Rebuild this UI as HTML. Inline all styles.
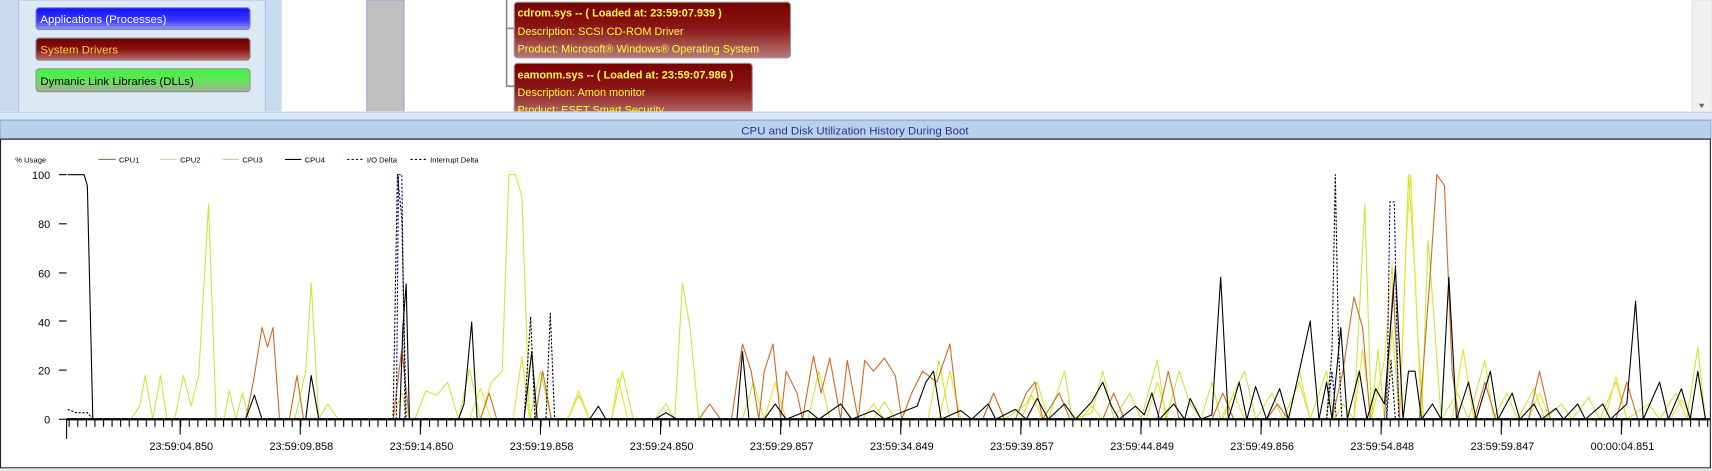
<!DOCTYPE html>
<html><head><meta charset="utf-8"><style>
html,body{margin:0;padding:0;background:#fff;overflow:hidden}
svg{display:block}
text{font-family:"Liberation Sans",sans-serif}
</style></head><body>
<svg width="1712" height="471" viewBox="0 0 1568 431.4" preserveAspectRatio="none" xmlns="http://www.w3.org/2000/svg">
<defs>
<linearGradient id="gb" x1="0" y1="0" x2="0" y2="1"><stop offset="0" stop-color="#1010ff"/><stop offset="0.6" stop-color="#3a3aff"/><stop offset="1" stop-color="#9a9af0"/></linearGradient>
<linearGradient id="gr" x1="0" y1="0" x2="0" y2="1"><stop offset="0" stop-color="#6e0000"/><stop offset="0.5" stop-color="#8a1010"/><stop offset="1" stop-color="#b87070"/></linearGradient>
<linearGradient id="gg" x1="0" y1="0" x2="0" y2="1"><stop offset="0" stop-color="#40f040"/><stop offset="0.5" stop-color="#60e858"/><stop offset="1" stop-color="#a8a898"/></linearGradient>
<linearGradient id="gbox" x1="0" y1="0" x2="0" y2="1"><stop offset="0" stop-color="#780000"/><stop offset="0.45" stop-color="#8a1515"/><stop offset="1" stop-color="#b87878"/></linearGradient>
<pattern id="mt" x="165" y="0" width="7.857" height="431" patternUnits="userSpaceOnUse"><rect x="0" y="384" width="1" height="7" fill="#000"/></pattern>
</defs>
<!-- top area -->
<rect x="0" y="0" width="1568" height="103" fill="#fff"/>
<rect x="0" y="0" width="258" height="103" fill="#c9daef"/>
<rect x="17" y="0" width="226" height="103" fill="#dde8f5" stroke="#a9c3e6" stroke-width="1"/>
<rect x="33" y="7" width="196" height="20" rx="3" fill="url(#gb)" stroke="#7a8ab0"/>
<text x="37" y="21" font-size="10.5" fill="#fff">Applications (Processes)</text>
<rect x="33" y="35" width="196" height="20" rx="3" fill="url(#gr)" stroke="#8a7a80"/>
<text x="37" y="49" font-size="10.5" fill="#ffd040">System Drivers</text>
<rect x="33" y="63" width="196" height="21" rx="3" fill="url(#gg)" stroke="#8a9a88"/>
<text x="37" y="78" font-size="10.5" fill="#000">Dymanic Link Libraries (DLLs)</text>
<rect x="336" y="0" width="34" height="103" fill="#c0c0c0" stroke="#8fa8cc"/>
<polyline points="464,0 464,79 471,79" fill="none" stroke="#888" stroke-width="1.5"/>
<line x1="464" y1="26" x2="471" y2="26" stroke="#888" stroke-width="1.5"/>
<rect x="471" y="2" width="253" height="51" rx="3" fill="url(#gbox)" stroke="#999"/>
<text x="474" y="15" font-size="10" font-weight="bold" fill="#ffff30">cdrom.sys -- ( Loaded at: 23:59:07.939 )</text>
<text x="474" y="32" font-size="10" fill="#ffff30">Description: SCSI CD-ROM Driver</text>
<text x="474" y="48" font-size="10" fill="#ffff30">Product: Microsoft® Windows® Operating System</text>
<rect x="471" y="58" width="218" height="50" rx="3" fill="url(#gbox)" stroke="#999"/>
<text x="474" y="72" font-size="10" font-weight="bold" fill="#ffff30">eamonm.sys -- ( Loaded at: 23:59:07.986 )</text>
<text x="474" y="88" font-size="10" fill="#ffff30">Description: Amon monitor</text>
<text x="474" y="104" font-size="10" fill="#ffff30">Product: ESET Smart Security</text>
<rect x="1550" y="0" width="18" height="103" fill="#f0f0f0" stroke="#e0e0e0"/>
<polygon points="1556,95 1561,95 1558.5,99" fill="#666"/>
<rect x="0" y="102" width="1568" height="8" fill="#dce8f5"/>
<line x1="0" y1="103" x2="1568" y2="103" stroke="#c0d2ea"/>
<!-- title -->
<rect x="0" y="110" width="1567" height="17" fill="#b9d1ea" stroke="#8aa2d8"/>
<text x="783" y="123" font-size="10.5" fill="#303090" text-anchor="middle">CPU and Disk Utilization History During Boot</text>
<!-- chart -->
<rect x="0.5" y="127.5" width="1566" height="301" fill="#fff" stroke="#222"/>
<rect x="0" y="429" width="1568" height="3" fill="#e8e8e8"/>
<text x="14" y="149" font-size="7" fill="#000">% Usage</text>
<g font-size="7" fill="#000">
<line x1="90" y1="146" x2="106" y2="146" stroke="#d06a20"/><text x="109" y="149">CPU1</text>
<line x1="147" y1="146" x2="162" y2="146" stroke="#f0e030"/><text x="165" y="149">CPU2</text>
<line x1="204" y1="146" x2="219" y2="146" stroke="#c8e838"/><text x="222" y="149">CPU3</text>
<line x1="261" y1="146" x2="276" y2="146" stroke="#000"/><text x="279" y="149">CPU4</text>
<line x1="318" y1="146" x2="333" y2="146" stroke="#000080" stroke-dasharray="2,2"/><text x="336" y="149">I/O Delta</text>
<line x1="376" y1="146" x2="391" y2="146" stroke="#000" stroke-dasharray="2,2"/><text x="394" y="149">Interrupt Delta</text>
</g>
<g font-size="10" fill="#000" text-anchor="end">
<text x="46" y="164">100</text><text x="46" y="209">80</text><text x="46" y="254">60</text><text x="46" y="299">40</text><text x="46" y="343">20</text><text x="46" y="388">0</text>
</g>
<g stroke="#000">
<line x1="54" y1="160" x2="61" y2="160"/><line x1="54" y1="205" x2="61" y2="205"/><line x1="54" y1="250" x2="61" y2="250"/><line x1="54" y1="294" x2="61" y2="294"/><line x1="54" y1="339" x2="61" y2="339"/><line x1="54" y1="384" x2="61" y2="384"/>
<line x1="61" y1="384" x2="61" y2="402"/>
</g>
<g fill="none" stroke-width="1" stroke-linejoin="round">
<polyline stroke="#c8e838" points="62,384 120,384 128,372 133,344 140,384 147,344 153,384 160,384 168,344 175,372 182,344 191,187 198,384 205,384 210,358 216,384 222,360 228,384 270,384 280,340 285,259 292,384 300,370 310,384 380,384 390,358 400,362 410,350 420,384 430,338 440,384 450,350 460,340 466,160 472,160 478,180 485,384 495,340 505,384 520,384 530,362 540,384 560,384 570,340 580,384 600,384 610,370 618,384 625,259 632,300 640,384 680,384 690,350 700,384 740,384 750,340 760,384 800,384 810,368 820,384 850,384 860,330 870,384 900,384 910,360 920,384 940,370 950,350 960,384 975,340 982,384 1000,378 1010,340 1020,384 1035,360 1045,384 1060,330 1068,384 1080,340 1090,370 1100,384 1110,350 1118,384 1130,360 1140,340 1150,384 1165,360 1175,384 1190,350 1200,384 1215,340 1222,384 1230,370 1240,384 1250,187 1256,384 1262,320 1268,384 1275,300 1282,384 1290,160 1296,250 1302,384 1308,220 1314,300 1320,384 1335,360 1345,384 1360,330 1368,384 1380,360 1390,384 1405,356 1415,384 1430,370 1440,384 1455,364 1465,384 1480,350 1490,384 1510,370 1520,384 1535,360 1545,384 1555,318 1562,384"/>
<polyline stroke="#f0e030" points="62,384 360,384 368,360 375,384 430,384 440,356 450,384 470,384 478,327 485,384 520,384 530,358 540,384 560,384 566,346 575,384 700,384 710,350 720,384 790,384 800,370 810,384 860,384 870,340 880,384 935,384 945,362 955,384 990,384 1000,372 1010,384 1050,384 1060,350 1070,384 1120,384 1130,360 1140,384 1180,384 1190,340 1200,384 1240,384 1248,320 1256,384 1268,330 1275,242 1282,384 1288,220 1292,160 1298,300 1304,384 1330,384 1340,320 1350,384 1400,384 1410,360 1420,384 1470,384 1480,345 1490,384 1530,384 1540,366 1550,384 1565,384"/>
<polyline stroke="#d06a20" points="62,384 225,384 232,350 240,300 245,318 250,300 256,384 265,384 272,344 278,384 360,384 368,320 375,384 440,384 448,360 455,384 490,384 497,340 505,384 640,384 650,370 660,384 670,384 680,315 688,340 695,384 700,340 708,315 715,384 720,340 730,360 735,384 745,326 752,360 760,328 770,384 776,330 786,384 792,330 800,340 810,328 820,344 826,384 835,360 845,340 858,350 870,315 878,384 900,384 910,360 920,384 930,384 940,360 948,350 955,384 970,360 980,384 1010,384 1020,360 1030,384 1060,384 1070,340 1080,384 1110,384 1120,360 1130,384 1160,384 1170,370 1180,384 1220,384 1230,340 1240,272 1248,300 1255,384 1268,384 1276,260 1282,384 1300,384 1310,250 1316,160 1323,170 1330,340 1336,384 1350,384 1360,350 1370,384 1400,384 1410,340 1420,384 1480,384 1490,350 1500,384 1555,384"/>
<polyline stroke="#000" points="62,160 77,160 80,170 85,384 225,384 233,362 240,384 280,384 285,344 292,384 366,384 369,300 372,260 375,384 420,384 425,370 432,295 437,384 480,384 487,322 492,384 540,384 548,372 555,384 600,384 610,378 620,384 675,384 680,322 686,384 700,384 710,370 720,384 740,376 750,384 770,370 780,384 800,376 810,384 840,372 848,350 855,340 862,384 880,376 890,384 905,370 912,384 930,375 940,384 950,365 960,384 975,370 985,384 1000,368 1010,350 1018,372 1025,384 1040,372 1048,380 1055,360 1062,384 1075,370 1085,384 1090,365 1100,384 1110,380 1118,254 1125,384 1135,350 1142,384 1150,354 1160,384 1172,356 1180,384 1190,340 1200,294 1208,384 1215,350 1220,384 1228,300 1234,384 1245,340 1252,384 1260,356 1268,370 1278,245 1285,384 1290,340 1296,340 1302,384 1312,370 1320,384 1327,254 1334,384 1345,350 1352,384 1365,340 1372,384 1385,360 1392,384 1405,370 1412,384 1425,374 1432,384 1445,370 1452,384 1468,370 1475,384 1490,370 1498,276 1505,384 1520,350 1528,384 1540,356 1548,384 1555,340 1562,384"/>
<polyline stroke="#000080" stroke-dasharray="2,1.5" points="62,384 363,384 365,160 368,160 371,384 1215,384 1220,340 1224,384 1270,384 1273,185 1277,185 1281,384 1565,384"/>
<polyline stroke="#000" stroke-dasharray="2,1.5" points="62,375 70,378 80,378 85,384 360,384 364,160 368,200 372,384 480,384 486,290 490,384 500,384 504,287 508,384 1215,384 1220,320 1223,160 1226,320 1229,384 1270,384 1274,330 1278,384 1565,384"/>
</g>
<rect x="61" y="384" width="1504" height="8" fill="url(#mt)"/>
<line x1="61" y1="384" x2="1566" y2="384" stroke="#000" stroke-width="2"/>
<g stroke="#000">
<line x1="165" y1="384" x2="165" y2="398"/><line x1="275" y1="384" x2="275" y2="398"/><line x1="385" y1="384" x2="385" y2="398"/><line x1="495" y1="384" x2="495" y2="398"/><line x1="605" y1="384" x2="605" y2="398"/><line x1="715" y1="384" x2="715" y2="398"/><line x1="825" y1="384" x2="825" y2="398"/><line x1="935" y1="384" x2="935" y2="398"/><line x1="1045" y1="384" x2="1045" y2="398"/><line x1="1155" y1="384" x2="1155" y2="398"/><line x1="1265" y1="384" x2="1265" y2="398"/><line x1="1375" y1="384" x2="1375" y2="398"/><line x1="1485" y1="384" x2="1485" y2="398"/>
</g>
<g font-size="10" fill="#000" text-anchor="middle">
<text x="166" y="412">23:59:04.850</text><text x="276" y="412">23:59:09.858</text><text x="386" y="412">23:59:14.850</text><text x="496" y="412">23:59:19.858</text><text x="606" y="412">23:59:24.850</text><text x="716" y="412">23:59:29.857</text><text x="826" y="412">23:59:34.849</text><text x="936" y="412">23:59:39.857</text><text x="1046" y="412">23:59:44.849</text><text x="1156" y="412">23:59:49.856</text><text x="1266" y="412">23:59:54.848</text><text x="1376" y="412">23:59:59.847</text><text x="1486" y="412">00:00:04.851</text>
</g>
</svg>
</body></html>
